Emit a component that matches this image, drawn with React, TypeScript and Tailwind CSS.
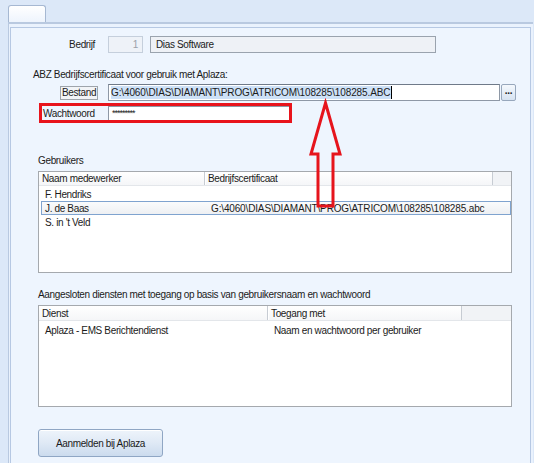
import React from 'react';

const font = { fontFamily: '"Liberation Sans", Arial, sans-serif' };

const gebruikers = [
  { naam: 'F. Hendriks', cert: '' },
  { naam: 'J. de Baas', cert: 'G:\\4060\\DIAS\\DIAMANT\\PROG\\ATRICOM\\108285\\108285.abc', selected: true },
  { naam: "S. in 't Veld", cert: '' },
];

const HeaderCell: React.FC<{ width: string; children: React.ReactNode }> = ({ width, children }) => (
  <div className={`${width} h-full flex items-center pl-[3px] border-r border-[#c7ccd3] shadow-[1px_0_0_#ffffff]`}>
    {children}
  </div>
);

const App: React.FC = () => {
  return (
    <div
      style={font}
      className="relative w-[534px] h-[463px] overflow-hidden bg-[#dce8f8] text-[10px] tracking-[-0.35px] text-[#1b1b1b] leading-[13px]"
    >
      {/* tab strip */}
      <div className="h-[22px] pt-[5px] pl-[8px]">
        <div className="w-[38px] h-[17px] rounded-t-[3px] border border-b-0 border-[#a6b8d2] bg-gradient-to-b from-[#ffffff] to-[#eef4fd]" />
      </div>

      {/* tab page */}
      <div className="ml-[8px] mr-[1px] h-[441px] border-t-2 border-l border-[#b9c9e0] bg-[#eaf2fd] pt-[3px] pl-[1px]">
        <div className="w-[521px] h-[436px] border-t border-l border-r border-[#b6c8e3] bg-[#eef5fe]">
          {/* Bedrijf */}
          <div className="flex items-center mt-[8px] h-[17px]">
            <div className="w-[84px] text-right">Bedrijf</div>
            <div className="ml-[13px] w-[35px] h-[17px] border border-[#c5cfdc] bg-[#eef2f8] text-right pr-[4px] text-[#9aa1aa] flex items-center justify-end">1</div>
            <div className="ml-[7px] w-[286px] h-[17px] border border-[#9aa3ae] bg-[#eef1f6] pl-[5px] flex items-center">Dias Software</div>
          </div>

          {/* ABZ */}
          <div className="mt-[15px] pl-[22px]">ABZ Bedrijfscertificaat voor gebruik met Aplaza:</div>

          {/* Bestand */}
          <div className="flex items-center mt-[3px] h-[17px]">
            <div className="ml-[49px] w-[38px] h-[14px] border border-[#9ea4ab] bg-[#f2f4f7] flex items-center justify-center">Bestand</div>
            <div className="ml-[10px] w-[392px] h-[17px] border border-[#8e98a6] border-t-[#6f7a89] bg-white pl-[2px] flex items-center">
              <span className="bg-[#cde1f7] border-r border-[#000000] pr-[1px] tracking-[-0.12px]">G:\4060\DIAS\DIAMANT\PROG\ATRICOM\108285\108285.ABC</span>
            </div>
            <div className="ml-[1px] w-[15px] h-[17px] rounded-[2px] border border-[#97a7bc] bg-gradient-to-b from-[#f4f8fd] to-[#d7e3f1] flex items-center justify-center text-[10px] leading-[10px] pb-[3px] font-bold">...</div>
          </div>

          {/* Wachtwoord */}
          <div className="mt-[2px] ml-[28px] w-[253px] h-[20px] border-[3px] border-[#e8141c] flex items-center">
            <div className="pl-[1px] w-[66px]">Wachtwoord</div>
            <div className="flex-1 h-full bg-white border-l border-t border-[#8e98a6] pl-[3px] flex items-center text-[9px] tracking-[-1px]">*********</div>
          </div>

          {/* Gebruikers */}
          <div className="mt-[31px] pl-[27px]">Gebruikers</div>
          <div className="mt-[4px] ml-[27px] w-[474px] h-[102px] border border-[#a5a9ae] bg-white">
            <div className="flex h-[14px] bg-gradient-to-b from-[#ffffff] to-[#f5f6f8] border-b border-[#e3e6ea]">
              <HeaderCell width="w-[166px]">Naam medewerker</HeaderCell>
              <HeaderCell width="w-[288px]">Bedrijfscertificaat</HeaderCell>
              <div className="flex-1 bg-[#f1f3f6]" />
            </div>
            <div className="mt-[1px]">
              {gebruikers.map((g) => (
                <div
                  key={g.naam}
                  className={`flex items-center h-[14px] ml-[2px] ${
                    g.selected ? 'border border-[#7fa3cf] bg-gradient-to-b from-[#fafbfc] to-[#eef0f3]' : 'border border-transparent'
                  }`}
                >
                  <div className="w-[167px] pl-[3px]">{g.naam}</div>
                  <div className="pl-[2px] tracking-[-0.15px]">{g.cert}</div>
                </div>
              ))}
            </div>
          </div>

          {/* Aangesloten diensten */}
          <div className="mt-[15px] pl-[27px]">Aangesloten diensten met toegang op basis van gebruikersnaam en wachtwoord</div>
          <div className="mt-[4px] ml-[27px] w-[474px] h-[102px] border border-[#a5a9ae] bg-white">
            <div className="flex h-[15px] bg-gradient-to-b from-[#ffffff] to-[#f5f6f8] border-b border-[#e3e6ea]">
              <HeaderCell width="w-[229px]">Dienst</HeaderCell>
              <HeaderCell width="w-[194px]">Toegang met</HeaderCell>
              <div className="flex-1 bg-[#f1f3f6]" />
            </div>
            <div className="flex items-center h-[14px] mt-[2px] ml-[3px]">
              <div className="w-[229px] pl-[3px]">Aplaza - EMS Berichtendienst</div>
              <div className="pl-[3px]">Naam en wachtwoord per gebruiker</div>
            </div>
          </div>

          {/* Button */}
          <button className="mt-[22px] ml-[27px] w-[125px] h-[28px] rounded-[3px] border border-[#8fa6c4] bg-gradient-to-b from-[#eef4fb] via-[#dfe9f5] to-[#cbdbee] shadow-[inset_0_1px_0_#ffffff] flex items-center justify-center">
            Aanmelden bij Aplaza
          </button>
        </div>
      </div>

      {/* red arrow annotation */}
      <svg className="absolute left-[305px] top-[98px]" width="42" height="114" viewBox="305 98 42 114">
        <polygon
          points="325.5,103 340,154 333,154 333,206 318,206 318,154 311,154"
          fill="none"
          stroke="#e6141c"
          strokeWidth="3"
          strokeLinejoin="miter"
        />
      </svg>
    </div>
  );
};

export default App;
